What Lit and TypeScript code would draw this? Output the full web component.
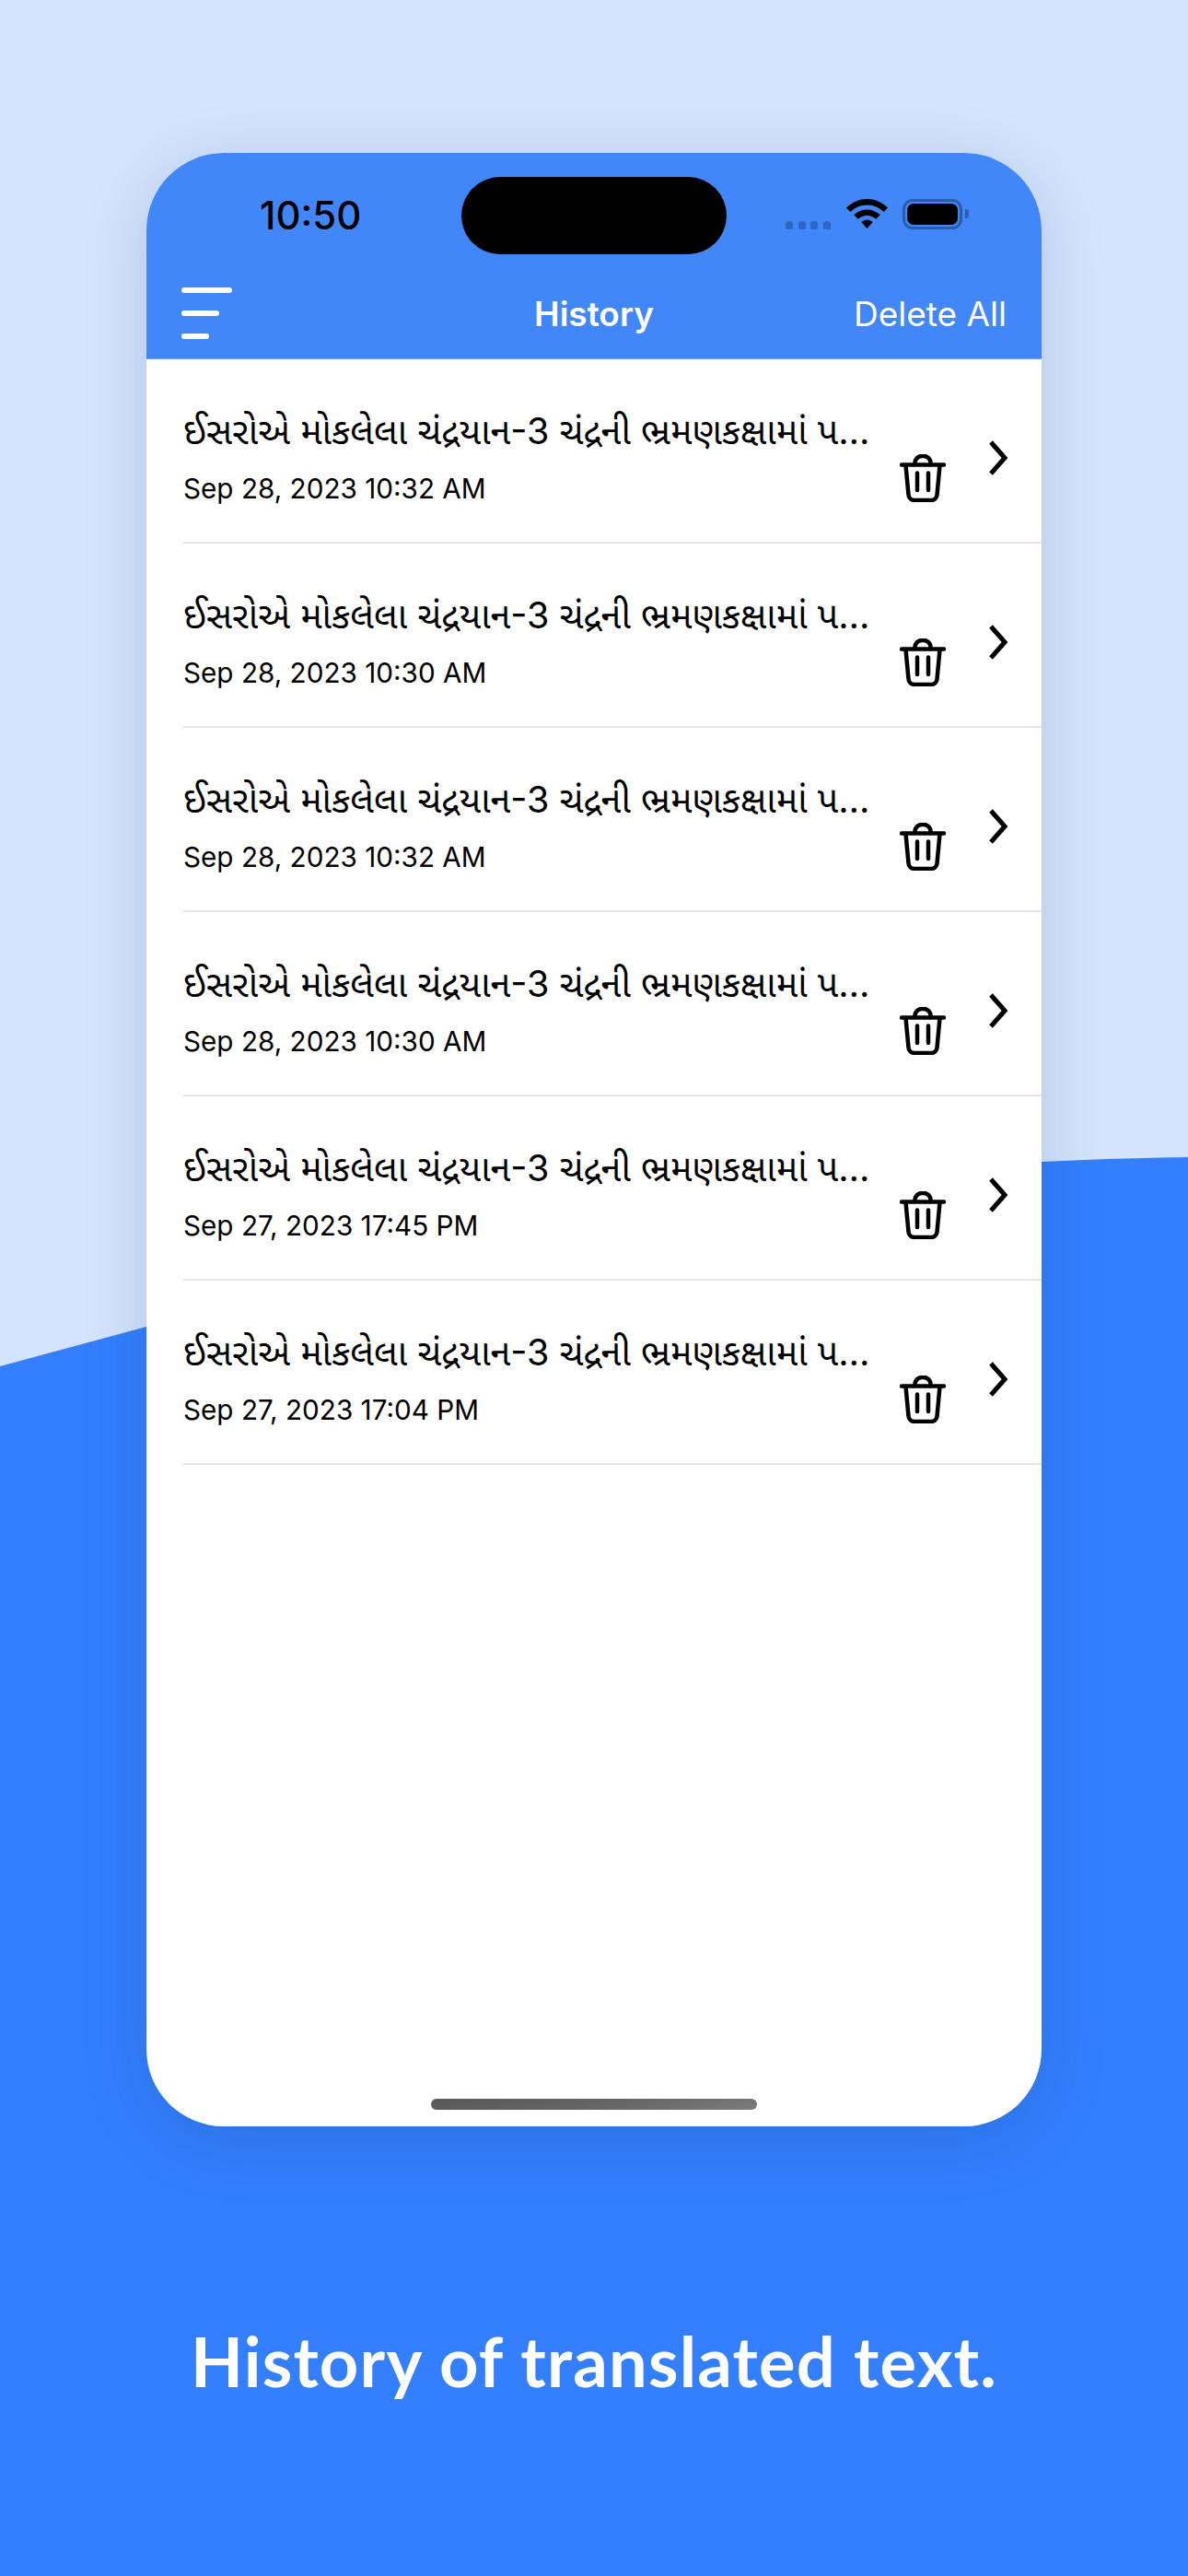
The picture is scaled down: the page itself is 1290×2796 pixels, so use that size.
import { LitElement, html, css, svg } from "lit";
import { customElement } from "lit/decorators.js";

const TITLE = "ઈસરોએ મોકલેલા ચંદ્રયાન-3 ચંદ્રની ભ્રમણકક્ષામાં પહોંચી ગયું છે અને હવે";
const ROWS = [
  "Sep 28, 2023 10:32 AM",
  "Sep 28, 2023 10:30 AM",
  "Sep 28, 2023 10:32 AM",
  "Sep 28, 2023 10:30 AM",
  "Sep 27, 2023 17:45 PM",
  "Sep 27, 2023 17:04 PM",
];

const trash = svg`<svg class="trash" viewBox="0 0 50 52" fill="none" stroke="#000" stroke-width="4.500" stroke-linecap="round" stroke-linejoin="round">
  <path d="M2 11.500H48"/>
  <path d="M6.500 12l3 32a6.500 6.500 0 0 0 6.500 6h18a6.500 6.500 0 0 0 6.500-6l3-32"/>
  <path d="M16.500 11V9.500a7.500 7.500 0 0 1 7.500-7.500h2a7.500 7.500 0 0 1 7.500 7.500V11"/>
  <path d="M19 20.500V39M31 20.500V39"/>
</svg>`;

const chevron = svg`<svg class="chev" viewBox="0 0 20 38" fill="none" stroke="#000" stroke-width="5">
  <path d="M2 2L17 19L2 36"/>
</svg>`;

@customElement("app-root")
export class AppRoot extends LitElement {
  static styles = css`
    :host {
      display: block;
      position: relative;
      width: 1290px;
      height: 2796px;
      overflow: hidden;
      background: #d4e4fe;
      font-family: Inter, "Noto Sans", "Noto Sans Gujarati", sans-serif;
    }
    .wave {
      position: absolute;
      left: 0;
      top: 0;
      width: 1290px;
      height: 2796px;
    }
    .page {
      position: relative;
      display: flex;
      flex-direction: column;
      align-items: center;
      padding-top: 166px;
    }
    .phone {
      position: relative;
      width: 972px;
      height: 2142px;
      border-radius: 84px;
      background: #fff;
      overflow: hidden;
      display: flex;
      flex-direction: column;
    }
    .shadow {
      border-radius: 84px;
      box-shadow: 0 14px 70px rgba(16, 40, 90, 0.17);
    }
    .head {
      height: 224px;
      flex: none;
      background: #4287f9;
      border-bottom: 1px solid #7aa9f8;
      box-sizing: border-box;
      display: flex;
      flex-direction: column;
    }
    .status {
      padding-top: 26px;
      height: 84px;
      display: flex;
      align-items: center;
      margin-bottom: 36px;
    }
    .time {
      margin-left: 123px;
      width: 219px;
      font-size: 42px;
      font-weight: 500;
      line-height: 84px;
      color: #000;
    }
    .island {
      width: 288px;
      height: 84px;
      border-radius: 43px;
      background: #000;
    }
    .dots {
      display: flex;
      gap: 5.500px;
      margin-left: 64px;
      margin-top: 20px;
    }
    .dots i {
      width: 8px;
      height: 9px;
      border-radius: 2.500px;
      background: #2f68c4;
    }
    .wifi {
      width: 45px;
      height: 33px;
      margin-left: 17px;
      margin-top: -3px;
    }
    .batt {
      margin-left: 16px;
      margin-top: -3px;
      width: 65px;
      height: 33px;
      box-sizing: border-box;
      border: 3px solid #2a5ead;
      border-radius: 11px;
      padding: 2px;
      position: relative;
    }
    .batt::before {
      content: "";
      display: block;
      width: 100%;
      height: 100%;
      background: #000;
      border-radius: 7px;
    }
    .batt::after {
      content: "";
      position: absolute;
      left: 65px;
      top: 8px;
      width: 4px;
      height: 10px;
      background: #2a5ead;
      border-radius: 0 4px 4px 0;
    }
    .nav {
      position: relative;
      flex: 1;
      display: flex;
      align-items: flex-start;
      justify-content: space-between;
      padding: 0 38px 0 38px;
    }
    .menu {
      display: flex;
      flex-direction: column;
      gap: 19.500px;
    }
    .menu i {
      display: block;
      height: 5.500px;
      border-radius: 3px;
      background: #fff;
    }
    .navtitle {
      position: absolute;
      left: 0;
      right: 0;
      top: 0;
      text-align: center;
      font-size: 37px;
      font-weight: 600;
      line-height: 58px;
      color: #fff;
    }
    .del {
      font-size: 37px;
      font-weight: 400;
      line-height: 58px;
      color: #fff;
    }
    .row {
      height: 200px;
      box-sizing: border-box;
      margin-left: 40px;
      border-bottom: 2px solid #e6e6e6;
      display: flex;
      flex: none;
    }
    .text {
      width: 756px;
      flex: none;
      padding-top: 50px;
    }
    .title {
      font-size: 39.500px;
      line-height: 56px;
      color: #000;
      white-space: nowrap;
      overflow: hidden;
      text-overflow: ellipsis;
    }
    .date {
      font-size: 29.700px;
      line-height: 36px;
      margin-top: 16px;
      color: #000;
    }
    .trash {
      width: 50px;
      height: 52px;
      margin-left: 22px;
      margin-top: 103px;
      flex: none;
    }
    .chev {
      width: 20px;
      height: 38px;
      margin-left: 47px;
      margin-top: 88px;
      flex: none;
    }
    .homebar {
      position: absolute;
      left: 309px;
      top: 2112px;
      width: 354px;
      height: 12px;
      border-radius: 6px;
      background: linear-gradient(170deg, #585858 0%, #666 55%, #7d7d7d 100%);
    }
    .caption {
      margin-top: 210px;
      font-family: Lato, sans-serif;
      font-weight: 700;
      font-size: 74px;
      line-height: 90px;
      letter-spacing: 1.200px;
      color: #fff;
      text-align: center;
    }
  `;

  render() {
    return html`
      <svg class="wave" viewBox="0 0 1290 2796">
        <path fill="#337fff" d="M0 1483L159 1440L1131 1261Q1210 1257 1290 1256V2796H0Z"/>
      </svg>
      <div class="page">
        <div class="shadow">
          <div class="phone">
            <div class="head">
              <div class="status">
                <div class="time">10:50</div>
                <div class="island"></div>
                <div class="dots"><i></i><i></i><i></i><i></i></div>
                <svg class="wifi" viewBox="0 0 45 33">
                  <path fill="#000" d="M22.500 0C14 0 6.500 3.300 0 9.500L4.500 14C9.500 9.200 15.500 6.500 22.500 6.500S35.500 9.200 40.500 14L45 9.500C38.500 3.300 31 0 22.500 0Z"/>
                  <path fill="#000" d="M22.500 11.500C17 11.500 12.300 13.500 8.300 17.300L12.800 21.800C15.500 19.300 18.800 18 22.500 18S29.500 19.300 32.200 21.800L36.700 17.300C32.700 13.500 28 11.500 22.500 11.500Z"/>
                  <path fill="#000" d="M22.500 22.500C20 22.500 18 23.400 16.300 25L22.500 32L28.700 25C27 23.400 25 22.500 22.500 22.500Z"/>
                </svg>
                <div class="batt"></div>
              </div>
              <div class="nav">
                <div class="menu">
                  <i style="width:55px"></i><i style="width:41px"></i><i style="width:30px"></i>
                </div>
                <div class="navtitle">History</div>
                <div class="del">Delete All</div>
              </div>
            </div>
            ${ROWS.map(
              (d) => html`
                <div class="row">
                  <div class="text">
                    <div class="title">${TITLE}</div>
                    <div class="date">${d}</div>
                  </div>
                  ${trash}${chevron}
                </div>
              `
            )}
            <div class="homebar"></div>
          </div>
        </div>
        <div class="caption">History of translated text.</div>
      </div>
    `;
  }
}
